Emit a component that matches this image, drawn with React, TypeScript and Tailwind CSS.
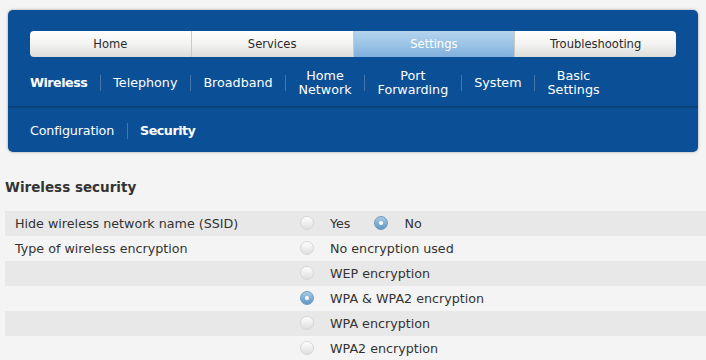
import React from 'react';

const tabs = ['Home', 'Services', 'Settings', 'Troubleshooting'];
const navItems = [
  { label: 'Wireless', bold: true },
  { label: 'Telephony' },
  { label: 'Broadband' },
  { label: 'Home\nNetwork' },
  { label: 'Port\nForwarding' },
  { label: 'System' },
  { label: 'Basic\nSettings' },
];

function Radio({ checked }: { checked?: boolean }) {
  return checked ? (
    <span className="relative inline-flex h-[14px] w-[14px] items-center justify-center rounded-full border border-[#6f9cc0] bg-gradient-to-b from-[#a9cbe6] to-[#5f97c6]">
      <span className="h-[4px] w-[4px] rounded-full bg-white" />
    </span>
  ) : (
    <span className="inline-block h-[14px] w-[14px] rounded-full border border-[#d6d6d6] bg-gradient-to-b from-[#ffffff] to-[#dedede]" />
  );
}

const rows = [
  { label: 'Hide wireless network name (SSID)', opts: [{ t: 'Yes' }, { t: 'No', c: true }] },
  { label: 'Type of wireless encryption', opts: [{ t: 'No encryption used' }] },
  { label: '', opts: [{ t: 'WEP encryption' }] },
  { label: '', opts: [{ t: 'WPA & WPA2 encryption', c: true }] },
  { label: '', opts: [{ t: 'WPA encryption' }] },
  { label: '', opts: [{ t: 'WPA2 encryption' }] },
];

export default function App() {
  return (
    <div className="min-h-[360px] w-[706px] overflow-hidden bg-[#f4f4f4] pt-[10px] font-['DejaVu_Sans',Verdana,sans-serif] text-[12.7px] text-[#333]">
      {/* Header panel */}
      <div className="mx-[8px] h-[142px] overflow-hidden rounded-[5px] bg-[#0b4f97] shadow-[0_0_3px_rgba(0,0,0,0.35)]">
        <div className="px-[22px] pt-[21px]">
          <div className="flex h-[26px] overflow-hidden rounded-[4px] font-['DejaVu_Sans_Condensed','DejaVu_Sans',sans-serif] text-[12.8px]">
            {tabs.map((t, i) => (
              <div
                key={t}
                className={`flex flex-1 items-center justify-center ${i > 0 ? 'border-l border-[#c9c9c9]' : ''} ${
                  t === 'Settings'
                    ? 'bg-gradient-to-b from-[#b5d4ee] via-[#9cc4e6] to-[#7fb0dc] text-white'
                    : 'bg-gradient-to-b from-[#ffffff] via-[#f3f3f1] to-[#dcdcda] text-[#2a2a2a]'
                }`}
              >
                {t}
              </div>
            ))}
          </div>
        </div>
        <div className="flex h-[49px] items-center px-[22px] pt-[2px] text-white">
          {navItems.map((n, i) => (
            <React.Fragment key={n.label}>
              {i > 0 && <span className="mx-[12.5px] h-[16px] w-px bg-[#4677ad]" />}
              <span className={`whitespace-pre text-center leading-[14px] ${n.bold ? 'font-bold tracking-[-0.5px]' : ''}`}>
                {n.label}
              </span>
            </React.Fragment>
          ))}
        </div>
        <div className="h-[3px] bg-gradient-to-b from-[#073a70] to-[#0b4f97]" />
        <div className="flex h-[42px] items-center px-[22px] pt-[2px] text-white">
          <span className="tracking-[-0.15px]">Configuration</span>
          <span className="mx-[12.5px] h-[16px] w-px bg-[#4677ad]" />
          <span className="font-bold tracking-[-0.5px]">Security</span>
        </div>
      </div>

      <h2 className="mt-[27px] pl-[5px] text-[13.5px] font-bold leading-[16px] text-[#333]">Wireless security</h2>

      <div className="mt-[16px] pl-[5px]">
        {rows.map((r, i) => (
          <div key={i} className={`flex h-[25px] items-center ${i % 2 === 0 ? 'bg-[#e8e8e8]' : 'bg-[#f4f4f4]'}`}>
            <div className="w-[295px] pl-[10px]">{r.label}</div>
            <div className="flex items-center">
              {r.opts.map((o) => (
                <div key={o.t} className="mr-[24px] flex items-center">
                  <Radio checked={o.c} />
                  <span className="ml-[16px]">{o.t}</span>
                </div>
              ))}
            </div>
          </div>
        ))}
      </div>
    </div>
  );
}
